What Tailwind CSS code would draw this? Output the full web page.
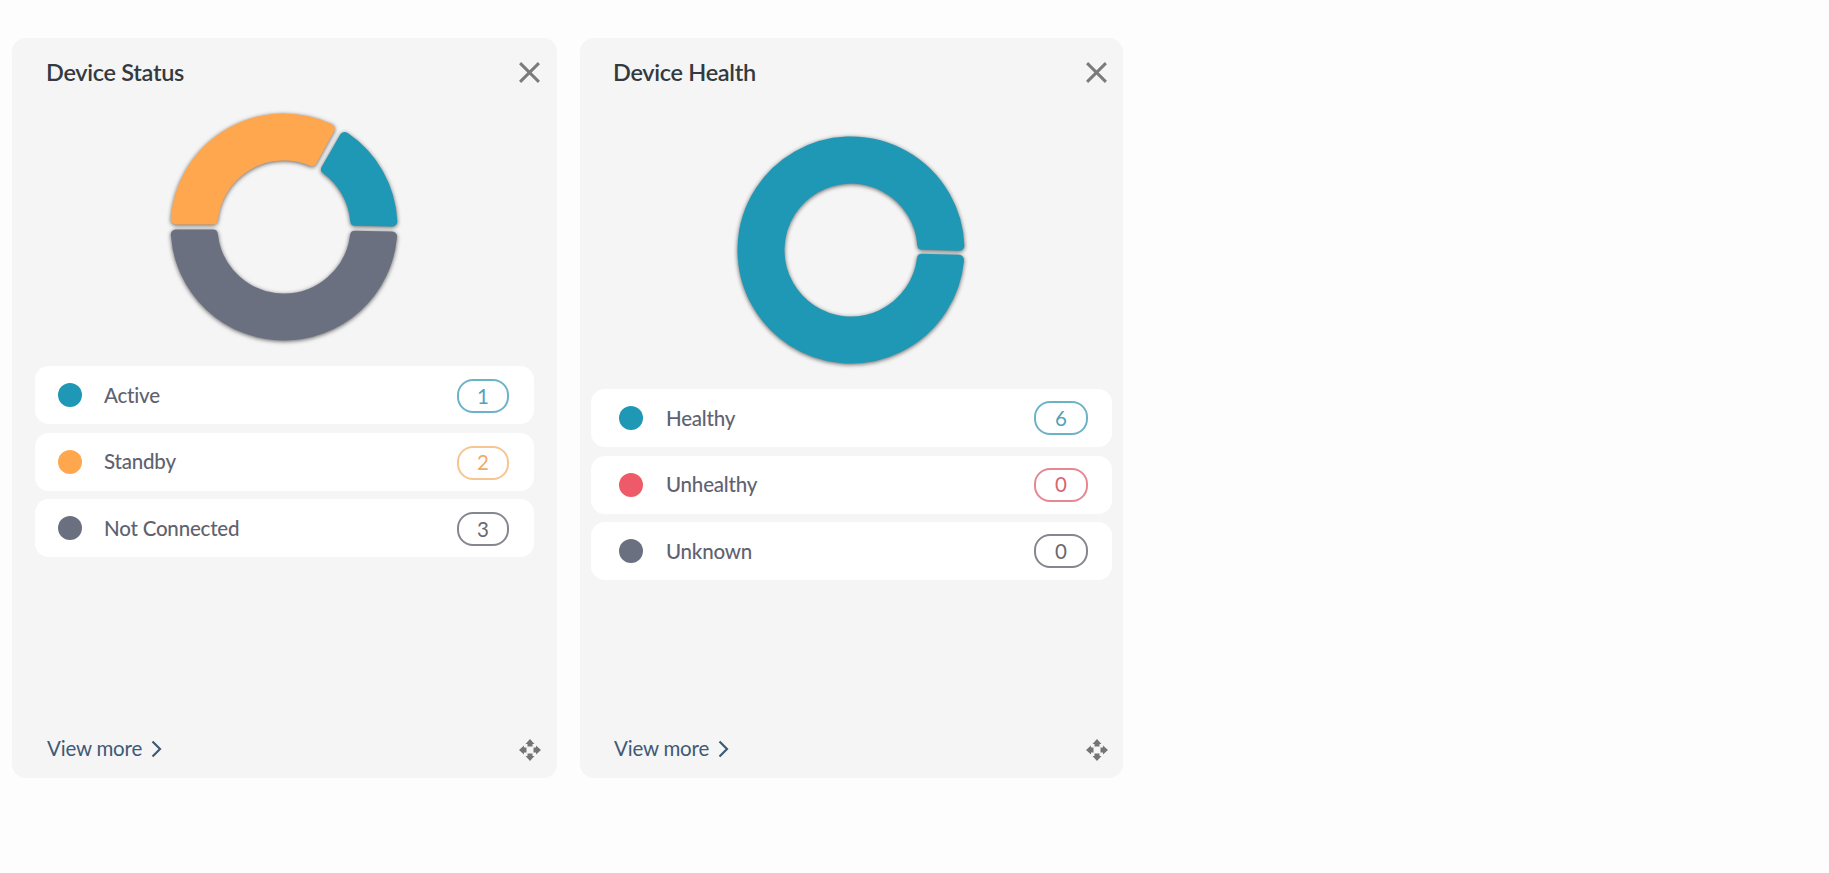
<!doctype html>
<html>
<head>
<meta charset="utf-8">
<script src="https://cdn.jsdelivr.net/npm/@tailwindcss/browser@4"></script>
</head>
<body class="bg-[#fdfdfd]">
<div class="h-[873px] w-[1829px] flex items-start gap-[23px] pl-[12px] pt-[38px] font-['Lato',sans-serif]">

  <!-- Device Status -->
  <section class="w-[545px] h-[740px] rounded-[14px] bg-[#f5f5f5] flex flex-col">
    <header class="flex items-center justify-between pl-[34px] pr-[16px] pt-[21px] h-[49px]">
      <h2 class="text-[23.5px] font-semibold tracking-[-0.3px] text-[#333a40]">Device Status</h2>
      <svg class="w-[23px] h-[23px] -translate-y-[1px]" viewBox="0 0 22 22" fill="none" stroke="#7b7b7b" stroke-width="2.8"><path d="M2 2 L20 20 M20 2 L2 20"/></svg>
    </header>
    <div class="flex justify-center mt-[23px] pr-[2px] h-[234px]">
      <svg class="w-[234px] h-[234px] drop-shadow-[0_1px_2px_rgba(0,0,0,0.6)]" viewBox="-117 -117 234 234" stroke-width="10" stroke-linejoin="round">
        <path fill="#1f98b6" stroke="#1f98b6" d="M60.6 -90 A108.5 108.5 0 0 1 108.36 -5.6 L71.23 -6.26 A71.5 71.5 0 0 0 42.04 -57.83 Z"/>
        <path fill="#ffa74f" stroke="#ffa74f" d="M-108.24 -7.5 A108.5 108.5 0 0 1 45.8 -98.35 L27.9 -65.85 A71.5 71.5 0 0 0 -71.1 -7.5 Z"/>
        <path fill="#6b7080" stroke="#6b7080" d="M108.09 9.38 A108.5 108.5 0 0 1 -108.24 7.5 L-71.1 7.5 A71.5 71.5 0 0 0 70.96 8.74 Z"/>
      </svg>
    </div>
    <ul class="mt-[22px] mx-[23px] flex flex-col gap-[8.5px]">
      <li class="h-[58px] rounded-[14px] bg-white flex items-center pl-[23px] pr-[25px]">
        <span class="w-[24px] h-[24px] rounded-full bg-[#1f98b6]"></span>
        <span class="ml-[22px] text-[20.5px] font-medium tracking-[-0.2px] text-[#5f6270]">Active</span>
        <span class="ml-auto w-[52px] h-[34px] translate-y-[1px] rounded-[16px] border-2 border-[#6db3c7] flex items-center justify-center text-[20.5px] text-[#4fa3bb]">1</span>
      </li>
      <li class="h-[58px] rounded-[14px] bg-white flex items-center pl-[23px] pr-[25px]">
        <span class="w-[24px] h-[24px] rounded-full bg-[#ffa74f]"></span>
        <span class="ml-[22px] text-[20.5px] font-medium tracking-[-0.2px] text-[#5f6270]">Standby</span>
        <span class="ml-auto w-[52px] h-[34px] translate-y-[1px] rounded-[16px] border-2 border-[#f7c592] flex items-center justify-center text-[20.5px] text-[#f0ab66]">2</span>
      </li>
      <li class="h-[58px] rounded-[14px] bg-white flex items-center pl-[23px] pr-[25px]">
        <span class="w-[24px] h-[24px] rounded-full bg-[#6b7080]"></span>
        <span class="ml-[22px] text-[20.5px] font-medium tracking-[-0.2px] text-[#5f6270]">Not Connected</span>
        <span class="ml-auto w-[52px] h-[34px] translate-y-[1px] rounded-[16px] border-2 border-[#85878f] flex items-center justify-center text-[20.5px] text-[#666973]">3</span>
      </li>
    </ul>
    <footer class="mt-auto flex items-center justify-between pl-[35px] pr-[16px] pb-[14px]">
      <a class="flex items-center gap-[9px] text-[20.5px] tracking-[-0.2px] text-[#3f5a75]">View more
        <svg class="w-[11px] h-[18px]" viewBox="0 0 11 18" fill="none" stroke="#3f5a75" stroke-width="2.2"><path d="M1.5 1.5 L9 9 L1.5 16.5"/></svg>
      </a>
      <svg class="w-[22px] h-[22px] translate-y-[1px]" viewBox="0 0 22 22" fill="#757575"><path d="M11 0 L15.5 5 L13.5 5 L13.5 7.5 L8.5 7.5 L8.5 5 L6.5 5 Z"/><path d="M11 22 L15.5 17 L13.5 17 L13.5 14.5 L8.5 14.5 L8.5 17 L6.5 17 Z"/><path d="M0 11 L5 6.5 L5 8.5 L7.5 8.5 L7.5 13.5 L5 13.5 L5 15.5 Z"/><path d="M22 11 L17 6.5 L17 8.5 L14.5 8.5 L14.5 13.5 L17 13.5 L17 15.5 Z"/></svg>
    </footer>
  </section>

  <!-- Device Health -->
  <section class="w-[543px] h-[740px] rounded-[14px] bg-[#f5f5f5] flex flex-col">
    <header class="flex items-center justify-between pl-[33px] pr-[15px] pt-[21px] h-[49px]">
      <h2 class="text-[23.5px] font-semibold tracking-[-0.3px] text-[#333a40]">Device Health</h2>
      <svg class="w-[23px] h-[23px] -translate-y-[1px]" viewBox="0 0 22 22" fill="none" stroke="#7b7b7b" stroke-width="2.8"><path d="M2 2 L20 20 M20 2 L2 20"/></svg>
    </header>
    <div class="flex justify-center mt-[46px] pr-[2px] h-[234px]">
      <svg class="w-[234px] h-[234px] drop-shadow-[0_1px_2px_rgba(0,0,0,0.6)]" viewBox="-117 -117 234 234" stroke-width="10" stroke-linejoin="round">
        <path fill="#1f98b6" stroke="#1f98b6" d="M108.05 9.83 A108.5 108.5 0 1 1 108.42 -4.17 L71.31 -5.13 A71.5 71.5 0 1 0 70.95 8.86 Z"/>
      </svg>
    </div>
    <ul class="mt-[22px] mx-[11px] flex flex-col gap-[8.5px]">
      <li class="h-[58px] rounded-[14px] bg-white flex items-center pl-[28px] pr-[24px]">
        <span class="w-[24px] h-[24px] rounded-full bg-[#1f98b6]"></span>
        <span class="ml-[23px] text-[20.5px] font-medium tracking-[-0.2px] text-[#5f6270]">Healthy</span>
        <span class="ml-auto w-[54px] h-[34px] rounded-[16px] border-2 border-[#6db3c7] flex items-center justify-center text-[20.5px] text-[#4fa3bb]">6</span>
      </li>
      <li class="h-[58px] rounded-[14px] bg-white flex items-center pl-[28px] pr-[24px]">
        <span class="w-[24px] h-[24px] rounded-full bg-[#ef5a68]"></span>
        <span class="ml-[23px] text-[20.5px] font-medium tracking-[-0.2px] text-[#5f6270]">Unhealthy</span>
        <span class="ml-auto w-[54px] h-[34px] rounded-[16px] border-2 border-[#e68791] flex items-center justify-center text-[20.5px] text-[#d9656f]">0</span>
      </li>
      <li class="h-[58px] rounded-[14px] bg-white flex items-center pl-[28px] pr-[24px]">
        <span class="w-[24px] h-[24px] rounded-full bg-[#6b7080]"></span>
        <span class="ml-[23px] text-[20.5px] font-medium tracking-[-0.2px] text-[#5f6270]">Unknown</span>
        <span class="ml-auto w-[54px] h-[34px] rounded-[16px] border-2 border-[#85878f] flex items-center justify-center text-[20.5px] text-[#666973]">0</span>
      </li>
    </ul>
    <footer class="mt-auto flex items-center justify-between pl-[34px] pr-[15px] pb-[14px]">
      <a class="flex items-center gap-[9px] text-[20.5px] tracking-[-0.2px] text-[#3f5a75]">View more
        <svg class="w-[11px] h-[18px]" viewBox="0 0 11 18" fill="none" stroke="#3f5a75" stroke-width="2.2"><path d="M1.5 1.5 L9 9 L1.5 16.5"/></svg>
      </a>
      <svg class="w-[22px] h-[22px] translate-y-[1px]" viewBox="0 0 22 22" fill="#757575"><path d="M11 0 L15.5 5 L13.5 5 L13.5 7.5 L8.5 7.5 L8.5 5 L6.5 5 Z"/><path d="M11 22 L15.5 17 L13.5 17 L13.5 14.5 L8.5 14.5 L8.5 17 L6.5 17 Z"/><path d="M0 11 L5 6.5 L5 8.5 L7.5 8.5 L7.5 13.5 L5 13.5 L5 15.5 Z"/><path d="M22 11 L17 6.5 L17 8.5 L14.5 8.5 L14.5 13.5 L17 13.5 L17 15.5 Z"/></svg>
    </footer>
  </section>
</div>
</body>
</html>
